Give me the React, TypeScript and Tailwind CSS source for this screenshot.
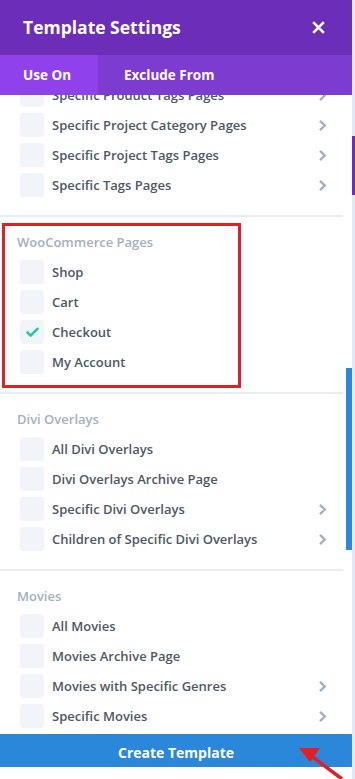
import { Check } from "lucide-react";

interface Item {
    label: string;
    checked?: boolean;
    more?: boolean;
}

interface Section {
    title?: string;
    items: Item[];
}

const sections: Section[] = [
    {
        items: [
            { label: "Specific Product Tags Pages", more: true },
            { label: "Specific Project Category Pages", more: true },
            { label: "Specific Project Tags Pages", more: true },
            { label: "Specific Tags Pages", more: true },
        ],
    },
    {
        title: "WooCommerce Pages",
        items: [
            { label: "Shop" },
            { label: "Cart" },
            { label: "Checkout", checked: true },
            { label: "My Account" },
        ],
    },
    {
        title: "Divi Overlays",
        items: [
            { label: "All Divi Overlays" },
            { label: "Divi Overlays Archive Page" },
            { label: "Specific Divi Overlays", more: true },
            { label: "Children of Specific Divi Overlays", more: true },
        ],
    },
    {
        title: "Movies",
        items: [
            { label: "All Movies" },
            { label: "Movies Archive Page" },
            { label: "Movies with Specific Genres", more: true },
            { label: "Specific Movies", more: true },
        ],
    },
];

function Chevron() {
    return (
        <svg width="9" height="13" viewBox="0 0 9 13" fill="none">
            <path d="M2 1.8 L6.8 6.5 L2 11.2" stroke="#a3b0c2" strokeWidth="2.4" />
        </svg>
    );
}

function Row({ item }: { item: Item }) {
    return (
        <div className="flex h-[30px] items-center pl-[20px] pr-[25px]">
            <div className="flex h-[24px] w-[24px] shrink-0 items-center justify-center rounded-[3px] bg-[#f1f4f9]">
                {item.checked && <Check className="h-[15px] w-[15px] text-[#29c4a9]" strokeWidth={4} />}
            </div>
            <span className="ml-[8px] flex-1 pt-[2px] text-[13px] font-semibold text-[#4c5866]">{item.label}</span>
            {item.more && <Chevron />}
        </div>
    );
}

export default function App() {
    return (
        <div className="relative h-[779px] w-[355px] overflow-hidden bg-[#e3e9f2] font-['Open_Sans',sans-serif]">
            <div className="flex h-full w-[352px] flex-col bg-white">
                {/* Header */}
                <div className="flex h-[55px] shrink-0 items-center justify-between bg-[#6c2eb9] pl-[23px] pr-[27px]">
                    <h1 className="text-[17.5px] font-bold text-white">Template Settings</h1>
                    <svg width="13" height="13" viewBox="0 0 13 13">
                        <path d="M1.2 1.2 L11.8 11.8 M11.8 1.2 L1.2 11.8" stroke="white" strokeWidth="2.6" />
                    </svg>
                </div>

                {/* Tabs */}
                <div className="flex h-[40px] shrink-0 bg-[#7e3bd0] text-[13.5px] font-bold text-white">
                    <div className="flex w-[98px] items-center bg-[#8f42ec] pl-[23px]">Use On</div>
                    <div className="flex items-center pl-[26px]">Exclude From</div>
                </div>

                {/* List */}
                <div className="flex-1 overflow-hidden">
                    <div className="-mt-[15px]">
                        {sections.map((section, i) => (
                            <div key={i}>
                                {i > 0 && <div className="mr-[9px] h-[2px] bg-[#e8edf3]" />}
                                <div className="pb-[15px]">
                                    {section.title && (
                                        <div className="mb-[5px] pl-[17px] pt-[16px] text-[13px] leading-[19px] font-semibold text-[#a3b0c2]">
                                            {section.title}
                                        </div>
                                    )}
                                    {section.items.map((item) => (
                                        <Row key={item.label} item={item} />
                                    ))}
                                </div>
                            </div>
                        ))}
                    </div>
                </div>

                {/* Footer */}
                <div className="mb-[12px] flex h-[33px] shrink-0 items-center justify-center bg-[#2b87da] pt-[4px] text-[14px] font-bold text-white">
                    Create Template
                </div>
            </div>

            {/* Scrollbar + background page accents */}
            <div className="absolute left-[346px] top-[368px] h-[182px] w-[6px] bg-[#2b87da]" />
            <div className="absolute left-[352px] top-[136px] h-[59px] w-[3px] bg-[#6c2eb9]" />

            {/* Red highlight annotation */}
            <div className="absolute left-[2px] top-[223px] h-[165px] w-[239px] border-[3px] border-[#e31e24]" />

            {/* Red arrow */}
            <svg className="absolute left-[290px] top-[740px]" width="65" height="39" viewBox="0 0 65 39">
                <path d="M52 39 L20 15" stroke="#e31e24" strokeWidth="3.5" />
                <path d="M9 8 L30 8 L20 22 Z" fill="#e31e24" />
            </svg>
        </div>
    );
}
